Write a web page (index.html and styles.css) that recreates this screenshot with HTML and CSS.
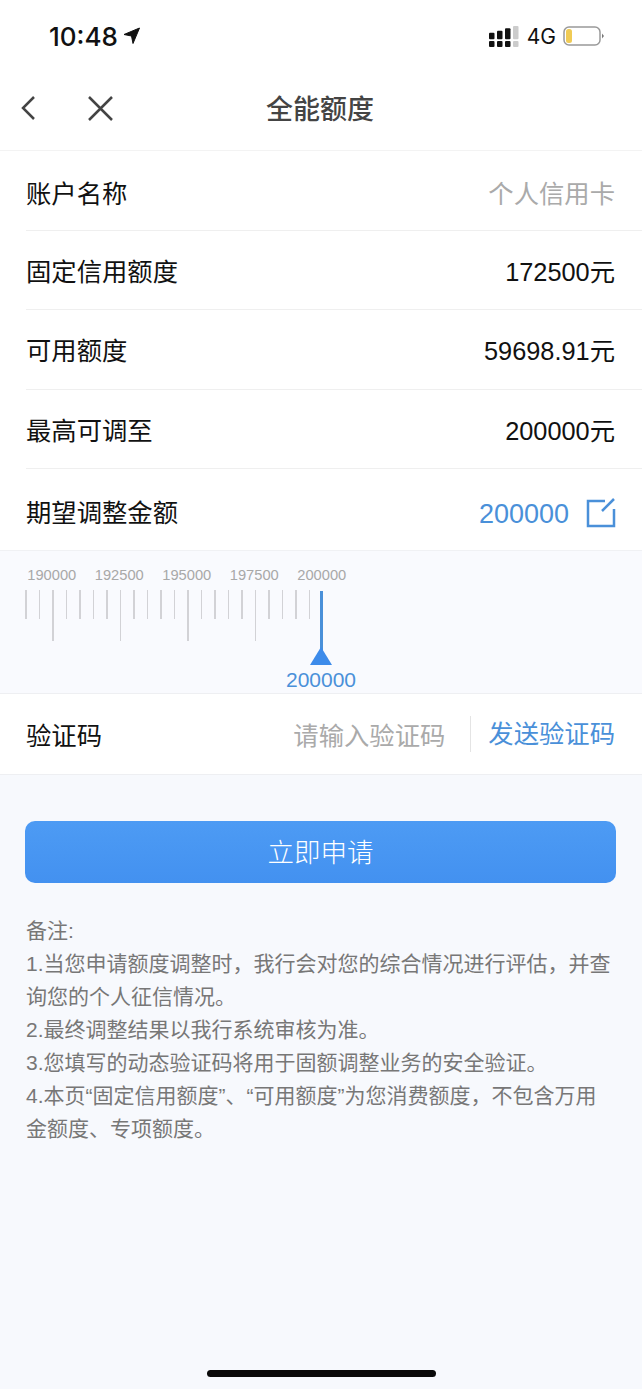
FILE: index.html
```html
<!DOCTYPE html>
<html lang="zh-CN">
<head>
    <meta charset="UTF-8">
    <meta name="viewport" content="width=device-width, initial-scale=1.0">
    <title>全能额度</title>
    <link rel="stylesheet" href="styles.css">
</head>
<body>
    <div class="status-bar">
        <div class="status-left">
            <span class="time">10:48</span>
            <svg class="arrow" width="18" height="18" viewBox="0 0 18 18"><path d="M16.500 1 1 7.500 8.500 9 10 16.500Z" fill="#111" stroke="#111" stroke-linejoin="round"/></svg>
        </div>
        <div class="status-right">
            <svg width="30" height="23" viewBox="0 0 30 23">
                <rect x="0" y="7.700" width="5.500" height="6.600" rx="1" fill="#111"/>
                <rect x="8" y="5.700" width="5.500" height="8.600" rx="1" fill="#111"/>
                <rect x="16" y="3.300" width="5.500" height="11" rx="1" fill="#111"/>
                <rect x="24" y="1" width="5.500" height="13.300" rx="1" fill="#ccc"/>
                <rect x="0" y="16" width="5.500" height="6" rx="1" fill="#111"/>
                <rect x="8" y="16" width="5.500" height="6" rx="1" fill="#111"/>
                <rect x="16" y="16" width="5.500" height="6" rx="1" fill="#111"/>
                <rect x="24" y="16" width="5.500" height="6" rx="1" fill="#ccc"/>
            </svg>
            <span class="network">4G</span>
            <svg class="battery" width="42" height="20" viewBox="0 0 42 20">
                <rect x="1" y="1" width="36" height="18" rx="5" fill="#fff" stroke="#999" stroke-width="1.500"/>
                <rect x="3" y="3" width="6" height="14" rx="2.500" fill="#f0cb55"/>
                <path d="M39 7.500 41 10 39 12.500Z" fill="#777"/>
            </svg>
        </div>
    </div>

    <header class="nav">
        <svg class="nav-back" width="18" height="28" viewBox="0 0 18 28"><path d="M14 3 3 14 14 25" fill="none" stroke="#444" stroke-width="2.500"/></svg>
        <svg class="nav-close" width="28" height="28" viewBox="0 0 28 28"><path d="M3 3 26 26M26 3 3 26" fill="none" stroke="#444" stroke-width="2.500"/></svg>
        <h1>全能额度</h1>
    </header>

    <section class="info-list">
        <div class="row row-first"><span>账户名称</span><span class="muted">个人信用卡</span></div>
        <div class="row"><span>固定信用额度</span><span>172500元</span></div>
        <div class="row"><span>可用额度</span><span>59698.91元</span></div>
        <div class="row"><span>最高可调至</span><span>200000元</span></div>
        <div class="row row-last">
            <span>期望调整金额</span>
            <span class="amount">
                200000
                <svg width="30" height="30" viewBox="0 0 30 30"><path d="M19 3H2V28H28V11M28 1 16 13" fill="none" stroke="#4a90d9" stroke-width="2.500"/></svg>
            </span>
        </div>
    </section>

    <section class="ruler">
        <div class="ruler-labels">
            <span>190000</span><span>192500</span><span>195000</span><span>197500</span><span>200000</span>
        </div>
        <div class="ruler-scale">
            <div class="ticks">
                <i></i><i></i><i class="long"></i><i></i><i></i><i></i><i></i><i class="long"></i><i></i><i></i><i></i><i></i><i class="long"></i><i></i><i></i><i></i><i></i><i class="long"></i><i></i><i></i><i></i><i></i>
            </div>
            <div class="pointer"></div>
        </div>
        <div class="ruler-value">200000</div>
    </section>

    <section class="code-row">
        <span class="code-label">验证码</span>
        <span class="code-input">请输入验证码</span>
        <span class="code-send">发送验证码</span>
    </section>

    <button class="submit">立即申请</button>

    <section class="notes">
        <p>备注:</p>
        <p>1.当您申请额度调整时，我行会对您的综合情况进行评估，并查询您的个人征信情况。</p>
        <p>2.最终调整结果以我行系统审核为准。</p>
        <p>3.您填写的动态验证码将用于固额调整业务的安全验证。</p>
        <p>4.本页“固定信用额度”、“可用额度”为您消费额度，不包含万用金额度、专项额度。</p>
    </section>

    <div class="home-bar"></div>
</body>
</html>
```

FILE: styles.css
```css
* {
    box-sizing: border-box;
}
body {
    margin: 0;
    height: 1389px;
    overflow: hidden;
    position: relative;
    background-color: #f7f9fd;
    color: #111;
    font-family: "Liberation Sans", "Noto Sans CJK SC", sans-serif;
}
.status-bar {
    height: 70px;
    padding: 2px 38px 0 49px;
    display: flex;
    justify-content: space-between;
    align-items: center;
    background-color: #fff;
}
.status-left {
    display: flex;
    align-items: center;
    gap: 5px;
}
.time {
    font-family: Inter, sans-serif;
    font-size: 26px;
    font-weight: 500;
    color: #111;
}
.status-right {
    display: flex;
    align-items: center;
    gap: 8px;
}
.network {
    font-family: Inter, sans-serif;
    font-size: 21px;
    color: #111;
}
.battery {
    margin-left: -1px;
    margin-right: -1px;
}
.nav {
    height: 81px;
    padding: 0 0 5px 20px;
    display: flex;
    align-items: center;
    position: relative;
    background-color: #fff;
    border-bottom: 1px solid #f3f3f3;
}
.nav-close {
    margin-left: 48px;
}
.nav h1 {
    position: absolute;
    left: 0;
    right: 0;
    margin: 0;
    padding-right: 2px;
    text-align: center;
    font-size: 27px;
    font-weight: 500;
    color: #444;
}
.info-list {
    padding-left: 26px;
    background-color: #fff;
}
.row {
    height: 79.500px;
    padding-right: 27px;
    display: flex;
    justify-content: space-between;
    align-items: center;
    font-size: 25.330px;
    border-bottom: 1px solid #efefef;
}
.row-first {
    padding-top: 3px;
}
.row-last {
    height: 81px;
    padding-right: 26px;
    padding-top: 2px;
    border-bottom: none;
}
.muted {
    color: #aaa;
}
.amount {
    display: flex;
    align-items: center;
    gap: 17px;
    margin-top: 8px;
    font-size: 27px;
    color: #4a90d9;
}
.amount svg {
    margin-bottom: 3px;
}
.ruler {
    height: 144px;
    padding-top: 15px;
    background-color: #f9fafe;
    border-top: 1px solid #f0f1f4;
    border-bottom: 1px solid #eeeff2;
}
.ruler-labels {
    display: flex;
    padding-left: 18px;
    font-size: 14.700px;
    line-height: 18px;
    color: #a8a8a8;
}
.ruler-labels span {
    width: 67.500px;
    text-align: center;
}
.ruler-scale {
    position: relative;
    height: 62px;
    margin-top: 6px;
}
.ticks {
    display: flex;
    align-items: flex-start;
    gap: 12px;
    padding-left: 25px;
}
.ticks i {
    width: 1.500px;
    height: 29px;
    background-color: #d2d2d6;
}
.ticks i.long {
    height: 51px;
}
.pointer {
    position: absolute;
    left: 319.500px;
    top: 1px;
    width: 3px;
    height: 60px;
    background-color: #4a90d9;
}
.pointer::after {
    content: "";
    position: absolute;
    left: -10px;
    bottom: -14px;
    border-left: 11.500px solid transparent;
    border-right: 11.500px solid transparent;
    border-bottom: 18px solid #3d8bea;
}
.ruler-value {
    margin-top: 15px;
    text-align: center;
    font-size: 21px;
    line-height: 26px;
    color: #4a90d9;
}
.code-row {
    height: 81px;
    padding: 0 27px 0 26px;
    display: flex;
    align-items: center;
    font-size: 25.330px;
    background-color: #fff;
    border-bottom: 1px solid #eeeff2;
}
.code-label {
    flex: 1;
}
.code-input {
    padding-right: 25px;
    color: #aaa;
}
.code-send {
    padding-left: 17px;
    line-height: 36px;
    color: #4a90d9;
    border-left: 1px solid #e4e4e4;
}
.submit {
    display: block;
    width: 591px;
    height: 62px;
    margin: 46px 0 0 25px;
    padding: 0 0 3px;
    border: none;
    border-radius: 10px;
    font-family: inherit;
    font-size: 26.500px;
    font-weight: 300;
    color: #fff;
    background: linear-gradient(#4d9bf4, #4391f0);
}
.notes {
    padding: 31px 26px 0;
    font-size: 21px;
    line-height: 33px;
    color: #777;
}
.notes p {
    margin: 0;
}
.home-bar {
    position: absolute;
    left: 207px;
    top: 1370px;
    width: 229px;
    height: 7px;
    border-radius: 4px;
    background-color: #0a0a0a;
}
```
